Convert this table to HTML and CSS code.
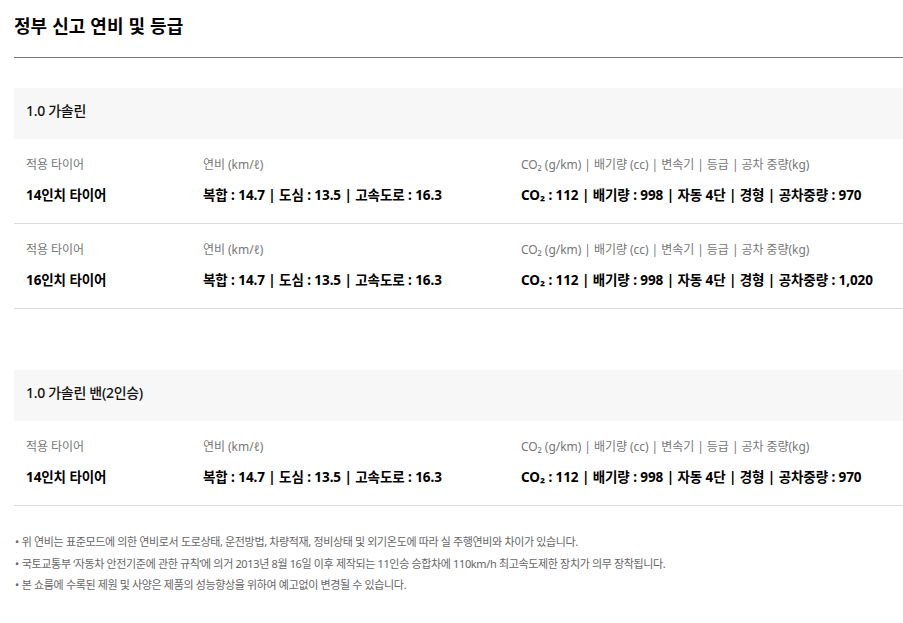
FILE: index.html
```html
<!DOCTYPE html>
<html lang="ko">
<head>
<meta charset="utf-8">
<title>정부 신고 연비 및 등급</title>
<link rel="stylesheet" href="styles.css">
</head>
<body>
<div class="page">
  <h2 class="title">정부 신고 연비 및 등급</h2>

  <section class="group">
    <div class="group-head">1.0 가솔린</div>
    <div class="row">
      <div class="cell"><div class="label">적용 타이어</div><div class="value">14인치 타이어</div></div>
      <div class="cell"><div class="label">연비 (km/ℓ)</div><div class="value">복합 : 14.7 | 도심 : 13.5 | 고속도로 : 16.3</div></div>
      <div class="cell"><div class="label">CO₂ (g/km) | 배기량 (cc) | 변속기 | 등급 | 공차 중량(kg)</div><div class="value">CO₂ : 112 | 배기량 : 998 | 자동 4단 | 경형 | 공차중량 : 970</div></div>
    </div>
    <div class="row">
      <div class="cell"><div class="label">적용 타이어</div><div class="value">16인치 타이어</div></div>
      <div class="cell"><div class="label">연비 (km/ℓ)</div><div class="value">복합 : 14.7 | 도심 : 13.5 | 고속도로 : 16.3</div></div>
      <div class="cell"><div class="label">CO₂ (g/km) | 배기량 (cc) | 변속기 | 등급 | 공차 중량(kg)</div><div class="value">CO₂ : 112 | 배기량 : 998 | 자동 4단 | 경형 | 공차중량 : 1,020</div></div>
    </div>
  </section>

  <section class="group group-next">
    <div class="group-head">1.0 가솔린 밴(2인승)</div>
    <div class="row">
      <div class="cell"><div class="label">적용 타이어</div><div class="value">14인치 타이어</div></div>
      <div class="cell"><div class="label">연비 (km/ℓ)</div><div class="value">복합 : 14.7 | 도심 : 13.5 | 고속도로 : 16.3</div></div>
      <div class="cell"><div class="label">CO₂ (g/km) | 배기량 (cc) | 변속기 | 등급 | 공차 중량(kg)</div><div class="value">CO₂ : 112 | 배기량 : 998 | 자동 4단 | 경형 | 공차중량 : 970</div></div>
    </div>
  </section>

  <ul class="notes">
    <li>위 연비는 표준모드에 의한 연비로서 도로상태, 운전방법, 차량적재, 정비상태 및 외기온도에 따라 실 주행연비와 차이가 있습니다.</li>
    <li>국토교통부 ‘자동차 안전기준에 관한 규칙’에 의거 2013년 8월 16일 이후 제작되는 11인승 승합차에 110km/h 최고속도제한 장치가 의무 장착됩니다.</li>
    <li>본 쇼룸에 수록된 제원 및 사양은 제품의 성능향상을 위하여 예고없이 변경될 수 있습니다.</li>
  </ul>
</div>
</body>
</html>
```

FILE: styles.css
```css
* { box-sizing: border-box; }
html, body { margin: 0; padding: 0; background: #fff; }
body {
  font-family: "Noto Sans", "Noto Sans CJK KR", sans-serif;
  color: #000;
}
.page {
  padding: 12px 0 0 14px;
}
.title {
  margin: 0;
  font-family: "Noto Sans CJK KR", sans-serif;
  font-size: 18px;
  line-height: 26px;
  font-weight: 700;
  letter-spacing: 0;
  padding-bottom: 19px;
  border-bottom: 1px solid #777;
}
.group { margin-top: 30px; }
.group-next { margin-top: 61px; }
.group-head {
  background: #f7f7f7;
  height: 51px;
  display: flex;
  align-items: center;
  padding: 0 0 8px 12px;
  font-size: 14px;
  font-weight: 500;
  color: #111;
  letter-spacing: -0.3px;
}
.row {
  display: grid;
  grid-template-columns: 177px 318px 1fr;
  padding: 17px 0 18px 12px;
  border-bottom: 1px solid #ddd;
}
.label {
  font-size: 12px;
  line-height: 18px;
  color: #777;
  letter-spacing: -0.05px;
}
.value {
  margin-top: 11px;
  font-size: 13.5px;
  line-height: 20px;
  font-weight: 700;
  color: #000;
  letter-spacing: -0.08px;
}
.notes {
  list-style: none;
  margin: 25px 0 0;
  padding: 0 0 0 1px;
}
.notes li {
  font-size: 11px;
  line-height: 21.5px;
  color: #666;
  letter-spacing: -0.35px;
}
.notes li::before {
  content: "•";
  margin-right: 3px;
}
```
